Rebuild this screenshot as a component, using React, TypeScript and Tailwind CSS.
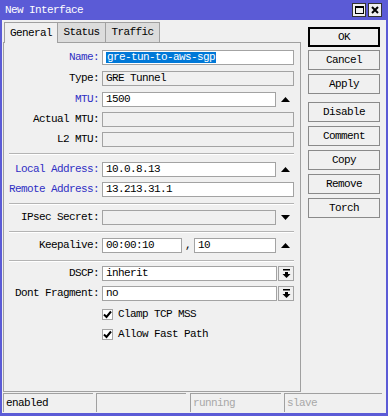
import React from 'react';

const Up = () => (
  <svg width="9" height="5" viewBox="0 0 9 5">
    <path d="M0 5 L4.5 0 L9 5 Z" fill="#000" />
  </svg>
);

const Down = () => (
  <svg width="9" height="5" viewBox="0 0 9 5">
    <path d="M0 0 L9 0 L4.5 5 Z" fill="#000" />
  </svg>
);

const DropIcon = () => (
  <svg width="9" height="9" viewBox="0 0 9 9">
    <rect x="1" y="0" width="7" height="1.5" fill="#000" />
    <rect x="3" y="3" width="3" height="2" fill="#000" />
    <path d="M0.5 5 L8.5 5 L4.5 9 Z" fill="#000" />
  </svg>
);

const Check = () => (
  <svg width="9" height="9" viewBox="0 0 9 9">
    <path d="M1 4.5 L3.5 7 L8 1.5" stroke="#000" strokeWidth="2" fill="none" />
  </svg>
);

type FieldProps = { value?: React.ReactNode; disabled?: boolean; className?: string };

const Field = ({ value, disabled, className }: FieldProps) => (
  <div
    className={`h-[15px] border border-[#a3a3a3] flex items-center pl-[3px] overflow-hidden whitespace-nowrap ${
      disabled ? 'bg-[#f0f0f0]' : 'bg-white'
    } ${className ?? 'flex-1'}`}
  >
    {value}
  </div>
);

type RowProps = { label: string; blue?: boolean; mt: string; children: React.ReactNode };

const Row = ({ label, blue, mt, children }: RowProps) => (
  <div className={`flex items-center h-[15px] ${mt}`}>
    <span className={`w-[95px] shrink-0 text-right ${blue ? 'text-[#2f2fc4]' : 'text-black'}`}>{label}:</span>
    <div className="ml-[3px] mr-[6px] flex flex-1 items-center h-[15px]">{children}</div>
  </div>
);

const Arrow = ({ down }: { down?: boolean }) => (
  <div className="w-[18px] flex justify-center">{down ? <Down /> : <Up />}</div>
);

const DropButton = () => (
  <div className="ml-[1px] w-[16px] h-[15px] border border-[#a3a3a3] bg-[#f0f0f0] flex items-center justify-center">
    <DropIcon />
  </div>
);

const Separator = ({ mt }: { mt: string }) => (
  <div className={`${mt} ml-[5px] mr-[6px] h-px bg-[#b4b4b4] shadow-[0_1px_0_#ffffff]`} />
);

const CheckRow = ({ label, mt }: { label: string; mt: string }) => (
  <div className={`flex items-center h-[11px] ml-[98px] ${mt}`}>
    <div className="w-[11px] h-[11px] border border-[#a3a3a3] bg-white flex items-center justify-center">
      <Check />
    </div>
    <span className="ml-[5px]">{label}</span>
  </div>
);

const Button = ({ label, mt, primary }: { label: string; mt: string; primary?: boolean }) => (
  <div
    className={`${mt} w-[72px] h-[20px] bg-[#f0f0f0] flex items-center justify-center ${
      primary ? 'border-2 border-black' : 'border border-[#8a8a8a]'
    }`}
  >
    {label}
  </div>
);

const App = () => {
  return (
    <div className="w-[388px] h-[416px] bg-[#5b5bd6] flex flex-col font-['Liberation_Mono',monospace] text-[11px] tracking-[-0.6px] leading-none text-black">
      {/* Title bar */}
      <div className="h-[20px] flex items-center shrink-0">
        <span className="pl-[5px] text-white">New Interface</span>
        <div className="ml-auto mr-[6px] flex gap-[2px]">
          <div className="w-[14px] h-[14px] bg-[#f0f0f0] border border-[#333] flex items-center justify-center">
            <div className="w-[9px] h-[8px] border border-black border-t-2" />
          </div>
          <div className="w-[14px] h-[14px] bg-[#f0f0f0] border border-[#333] flex items-center justify-center">
            <svg width="8" height="8" viewBox="0 0 8 8">
              <path d="M1 1 L7 7 M7 1 L1 7" stroke="#000" strokeWidth="2" />
            </svg>
          </div>
        </div>
      </div>

      {/* Body */}
      <div className="flex-1 mx-[2px] mb-[3px] bg-[#f0f0f0] flex flex-col">
        <div className="flex">
          {/* Left: tabs + panel */}
          <div className="ml-[1px] w-[298px] flex flex-col">
            <div className="h-[22px] flex items-end">
              <div className="ml-[1px] w-[54px] h-[21px] border border-b-0 border-[#a0a0a0] bg-[#f0f0f0] flex items-center justify-center relative z-10 -mb-px">
                General
              </div>
              <div className="w-[48px] h-[20px] border border-l-0 border-b-0 border-[#a0a0a0] bg-[#dcdcdc] flex items-center justify-center">
                Status
              </div>
              <div className="w-[54px] h-[20px] border border-l-0 border-b-0 border-[#a0a0a0] bg-[#dcdcdc] flex items-center justify-center">
                Traffic
              </div>
            </div>
            <div className="h-[350px] border border-[#a0a0a0] flex flex-col">
              <Row label="Name" blue mt="mt-[7px]">
                <Field
                  value={<span className="bg-[#0078d7] text-white px-px">gre-tun-to-aws-sgp</span>}
                />
              </Row>
              <Row label="Type" mt="mt-[6px]">
                <Field value="GRE Tunnel" disabled />
              </Row>
              <Row label="MTU" blue mt="mt-[6px]">
                <Field value="1500" />
                <Arrow />
              </Row>
              <Row label="Actual MTU" mt="mt-[5px]">
                <Field disabled />
              </Row>
              <Row label="L2 MTU" mt="mt-[5px]">
                <Field disabled />
              </Row>
              <Separator mt="mt-[6px]" />
              <Row label="Local Address" blue mt="mt-[8px]">
                <Field value="10.0.8.13" />
                <Arrow />
              </Row>
              <Row label="Remote Address" blue mt="mt-[5px]">
                <Field value="13.213.31.1" />
              </Row>
              <Separator mt="mt-[6px]" />
              <Row label="IPsec Secret" mt="mt-[6px]">
                <Field disabled />
                <Arrow down />
              </Row>
              <Separator mt="mt-[6px]" />
              <Row label="Keepalive" mt="mt-[6px]">
                <Field value="00:00:10" className="w-[80px]" />
                <span className="w-[12px] text-center">,</span>
                <Field value="10" />
                <Arrow />
              </Row>
              <Separator mt="mt-[7px]" />
              <Row label="DSCP" mt="mt-[5px]">
                <Field value="inherit" />
                <DropButton />
              </Row>
              <Row label="Dont Fragment" mt="mt-[5px]">
                <Field value="no" />
                <DropButton />
              </Row>
              <CheckRow label="Clamp TCP MSS" mt="mt-[8px]" />
              <CheckRow label="Allow Fast Path" mt="mt-[9px]" />
            </div>
          </div>

          {/* Right: buttons */}
          <div className="ml-[7px] flex flex-col">
            <Button label="OK" primary mt="mt-[7px]" />
            <Button label="Cancel" mt="mt-[3px]" />
            <Button label="Apply" mt="mt-[4px]" />
            <Button label="Disable" mt="mt-[8px]" />
            <Button label="Comment" mt="mt-[4px]" />
            <Button label="Copy" mt="mt-[4px]" />
            <Button label="Remove" mt="mt-[4px]" />
            <Button label="Torch" mt="mt-[4px]" />
          </div>
        </div>

        {/* Status bar */}
        <div className="mt-[1px] ml-[1px] flex h-[19px]">
          <div className="w-[90px] border-t border-l border-[#a0a0a0] pl-[2px] flex items-center">enabled</div>
          <div className="ml-[3px] w-[90px] border-t border-l border-[#a0a0a0]" />
          <div className="ml-[4px] w-[91px] border-t border-l border-[#a0a0a0] pl-[2px] flex items-center text-[#a8a8a8]">
            running
          </div>
          <div className="ml-[3px] w-[98px] border-t border-l border-[#a0a0a0] pl-[2px] flex items-center text-[#a8a8a8]">
            slave
          </div>
        </div>
      </div>
    </div>
  );
};

export default App;
